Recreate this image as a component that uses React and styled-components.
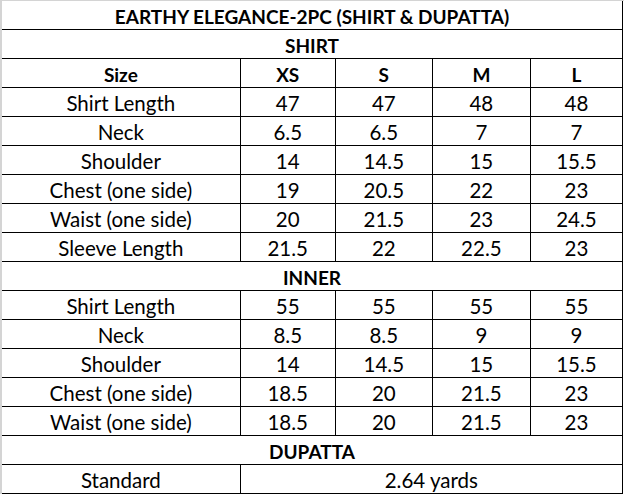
import React from 'react';
import styled, { createGlobalStyle } from 'styled-components';

const GlobalStyle = createGlobalStyle`
    html, body {
        margin: 0;
        padding: 0;
        background: #ffffff;
    }
    body {
        font-family: Lato, "Open Sans", sans-serif;
        color: #000000;
    }
`;

const Sheet = {
    Wrap: styled.div`
        width: 624px;
        height: 494px;
        overflow: hidden;
        border-left: 2px solid #d4d4d4;
        border-top: 1px solid #d4d4d4;
        box-sizing: border-box;
        background: #ffffff;
    `,
    Table: styled.table`
        border-collapse: collapse;
        table-layout: fixed;
        width: 621px;
    `,
    Td: styled.td`
        height: 25px;
        padding: 3px 0 0 0;
        border-right: 1px solid #000;
        border-bottom: 1px solid #000;
        text-align: center;
        vertical-align: middle;
        font-size: ${props => (props.bold ? '19px' : '20.5px')};
        line-height: 25px;
        font-weight: ${props => (props.bold ? 700 : 400)};
        white-space: nowrap;
        overflow: hidden;
    `
};

const widths = [238, 95, 97, 98, 92];

const shirtRows = [
    ['Shirt Length', '47', '47', '48', '48'],
    ['Neck', '6.5', '6.5', '7', '7'],
    ['Shoulder', '14', '14.5', '15', '15.5'],
    ['Chest (one side)', '19', '20.5', '22', '23'],
    ['Waist (one side)', '20', '21.5', '23', '24.5'],
    ['Sleeve Length', '21.5', '22', '22.5', '23']
];

const innerRows = [
    ['Shirt Length', '55', '55', '55', '55'],
    ['Neck', '8.5', '8.5', '9', '9'],
    ['Shoulder', '14', '14.5', '15', '15.5'],
    ['Chest (one side)', '18.5', '20', '21.5', '23'],
    ['Waist (one side)', '18.5', '20', '21.5', '23']
];

function SectionTitle({ children }) {
    return (
        <tr>
            <Sheet.Td bold colSpan={5}>{children}</Sheet.Td>
        </tr>
    );
}

function DataRow({ cells, bold }) {
    return (
        <tr>
            {cells.map((c, i) => (
                <Sheet.Td key={i} bold={bold}>{c}</Sheet.Td>
            ))}
        </tr>
    );
}

export default function App() {
    return (
        <>
            <GlobalStyle />
            <Sheet.Wrap>
                <Sheet.Table>
                    <colgroup>
                        {widths.map((w, i) => <col key={i} style={{ width: w }} />)}
                    </colgroup>
                    <tbody>
                        <SectionTitle>EARTHY ELEGANCE-2PC (SHIRT &amp; DUPATTA)</SectionTitle>
                        <SectionTitle>SHIRT</SectionTitle>
                        <DataRow bold cells={['Size', 'XS', 'S', 'M', 'L']} />
                        {shirtRows.map((r, i) => <DataRow key={i} cells={r} />)}
                        <SectionTitle>INNER</SectionTitle>
                        {innerRows.map((r, i) => <DataRow key={i} cells={r} />)}
                        <SectionTitle>DUPATTA</SectionTitle>
                        <tr>
                            <Sheet.Td>Standard</Sheet.Td>
                            <Sheet.Td colSpan={4}>2.64 yards</Sheet.Td>
                        </tr>
                    </tbody>
                </Sheet.Table>
            </Sheet.Wrap>
        </>
    );
}
